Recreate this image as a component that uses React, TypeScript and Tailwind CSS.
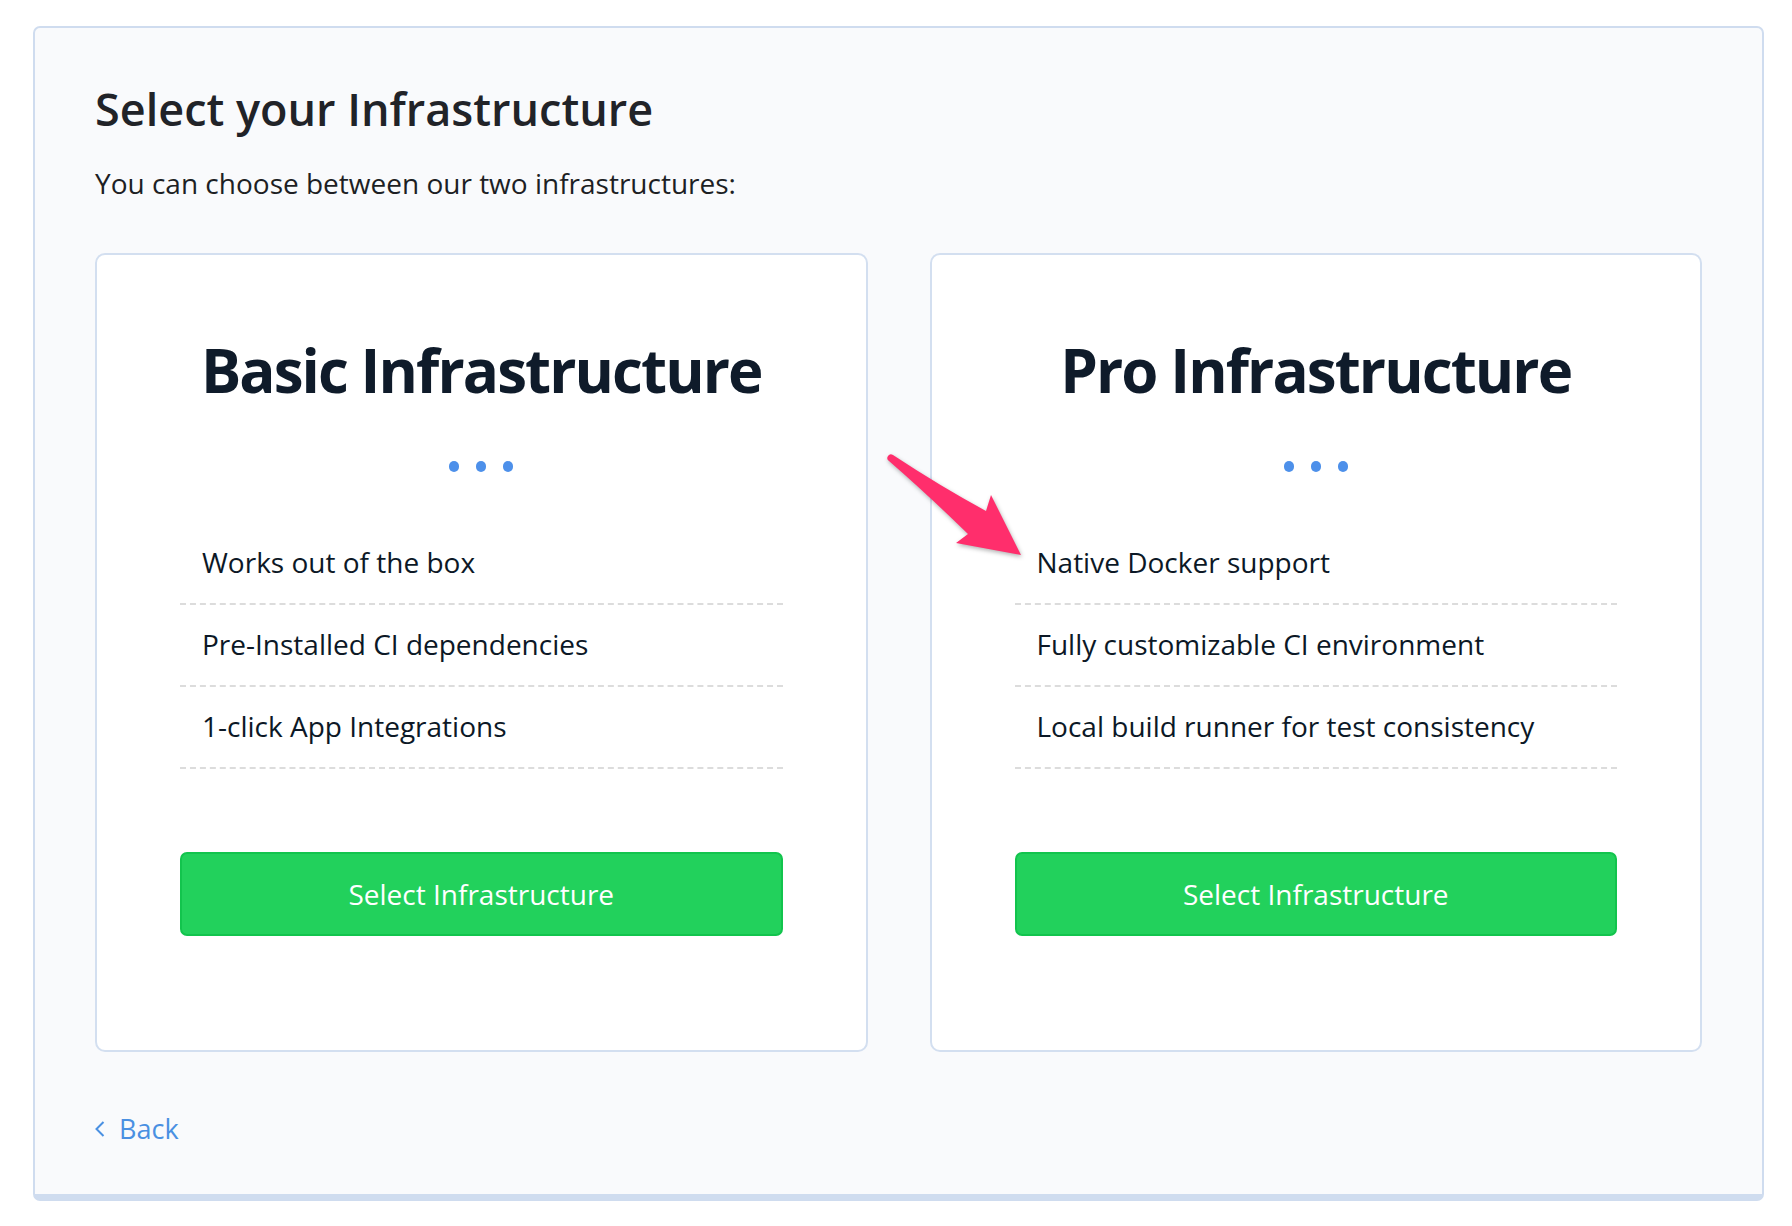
import React from "react";

const plans = [
  {
    title: "Basic Infrastructure",
    features: ["Works out of the box", "Pre-Installed CI dependencies", "1-click App Integrations"],
  },
  {
    title: "Pro Infrastructure",
    features: ["Native Docker support", "Fully customizable CI environment", "Local build runner for test consistency"],
  },
];

function Arrow() {
  return (
    <svg
      className="absolute left-[790px] top-[197px] w-[145px] h-[115px] overflow-visible drop-shadow-[1px_2px_2px_rgba(0,0,0,0.3)]"
      viewBox="0 0 145 115"
    >
      <path
        d="M8,5 Q55,36 101,61 L106,45 L136,105 L71,93 L83,84 Q42,44 4,11 A3.6,3.6 0 0 1 8,5 Z"
        fill="#ff2e6c"
      />
    </svg>
  );
}

function PlanCard({ title, features }: { title: string; features: string[] }) {
  return (
    <div className="bg-white border-2 border-[#d3dff0] rounded-[10px] px-[83px] pt-[77px] pb-[114px]">
      <h2 className="text-center text-[60px] leading-[76px] font-bold text-[#0f1b2a] tracking-[-1.9px] whitespace-nowrap">
        {title}
      </h2>
      <div className="flex justify-center gap-[17px] mt-[53px]">
        <span className="w-[10px] h-[11px] rounded-full bg-[#4d90ea]" />
        <span className="w-[10px] h-[11px] rounded-full bg-[#4d90ea]" />
        <span className="w-[10px] h-[11px] rounded-full bg-[#4d90ea]" />
      </div>
      <ul className="mt-[51px]">
        {features.map((f) => (
          <li
            key={f}
            className="pl-[22px] pt-[21px] pb-[23px] text-[28px] leading-[36px] text-[#0c1826] border-b-2 border-dashed border-[#dcdcdc]"
          >
            {f}
          </li>
        ))}
      </ul>
      <button className="mt-[83px] w-full h-[84px] rounded-[7px] bg-[#22d15c] border-2 border-[#12c44d] text-white text-[28px] leading-[36px]">
        Select Infrastructure
      </button>
    </div>
  );
}

export default function App() {
  return (
    <div className="min-h-screen bg-white pt-[26px] pl-[33px] pr-[28px] font-['Open_Sans',sans-serif]">
      <div className="bg-[#f9fafc] border-2 border-b-[7px] border-[#cfdcef] rounded-[7px] px-[60px] pt-[53px] pb-[47px]">
        <h1 className="text-[45px] leading-[56px] font-semibold text-[#212328]">Select your Infrastructure</h1>
        <p className="mt-[28px] text-[28px] leading-[36px] text-[#1d1f24]">You can choose between our two infrastructures:</p>

        <div className="relative mt-[52px] grid grid-cols-2 gap-[62px]">
          {plans.map((p) => (
            <PlanCard key={p.title} title={p.title} features={p.features} />
          ))}
          <Arrow />
        </div>

        <a href="#" className="mt-[59px] flex items-center gap-[14px] text-[27px] leading-[36px] text-[#4a90e2]">
          <svg width="10" height="16" viewBox="0 0 10 16" fill="none">
            <polyline points="8.5,1 1.5,8 8.5,15" stroke="#4a90e2" strokeWidth="2" />
          </svg>
          Back
        </a>
      </div>
    </div>
  );
}
